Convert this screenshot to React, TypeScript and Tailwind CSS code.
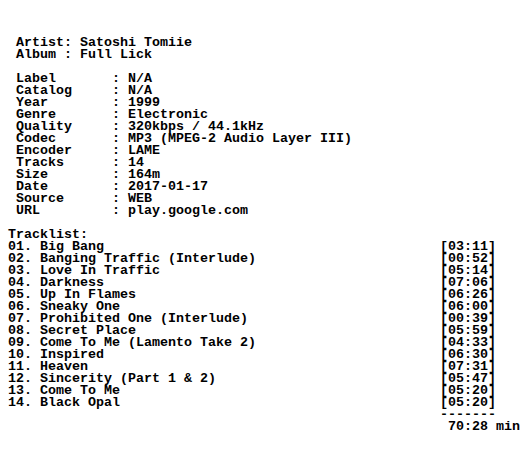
const info: [string, string][] = [
  ["Label", "N/A"],
  ["Catalog", "N/A"],
  ["Year", "1999"],
  ["Genre", "Electronic"],
  ["Quality", "320kbps / 44.1kHz"],
  ["Codec", "MP3 (MPEG-2 Audio Layer III)"],
  ["Encoder", "LAME"],
  ["Tracks", "14"],
  ["Size", "164m"],
  ["Date", "2017-01-17"],
  ["Source", "WEB"],
  ["URL", "play.google.com"],
];

const tracks: [string, string][] = [
  ["Big Bang", "03:11"],
  ["Banging Traffic (Interlude)", "00:52"],
  ["Love In Traffic", "05:14"],
  ["Darkness", "07:06"],
  ["Up In Flames", "06:26"],
  ["Sneaky One", "06:00"],
  ["Prohibited One (Interlude)", "00:39"],
  ["Secret Place", "05:59"],
  ["Come To Me (Lamento Take 2)", "04:33"],
  ["Inspired", "06:30"],
  ["Heaven", "07:31"],
  ["Sincerity (Part 1 & 2)", "05:47"],
  ["Come To Me", "05:20"],
  ["Black Opal", "05:20"],
];

export default function App() {
  const lines: string[] = [
    "  Artist: Satoshi Tomiie",
    "  Album : Full Lick",
    "",
    ...info.map(([k, v]) => "  " + k.padEnd(12, " ") + ": " + v),
    "",
    " Tracklist:",
    ...tracks.map(
      ([title, time], i) =>
        " " + (String(i + 1).padStart(2, "0") + ". " + title).padEnd(54, " ") + "[" + time + "]"
    ),
    " ".repeat(55) + "-------",
    " ".repeat(56) + "70:28 min",
  ];

  return (
    <div className="w-[528px] h-[456px] bg-white overflow-hidden">
      <pre className="pt-[37px] m-0 text-black font-bold text-[13.333px] leading-[12px] font-['Liberation_Mono',monospace] whitespace-pre">
        {lines.join("\n")}
      </pre>
    </div>
  );
}
